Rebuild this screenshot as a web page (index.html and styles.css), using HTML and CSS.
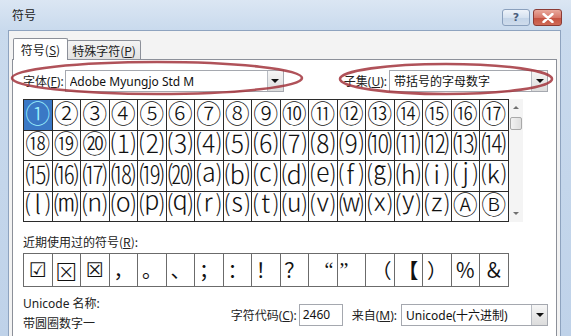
FILE: index.html
```html
<!DOCTYPE html>
<html lang="zh-CN">
<head>
<meta charset="utf-8">
<title>符号</title>
<link rel="stylesheet" href="styles.css">
</head>
<body>
<div class="window">
  <div class="titlebar">
    <span class="title">符号</span>
    <div class="tbtns">
      <div class="tbtn help">?</div>
      <div class="tbtn close"><svg width="12" height="10" viewBox="0 0 12 10"><path d="M1.5 1 L10.5 9 M10.5 1 L1.5 9" stroke="#fff" stroke-width="2.4" stroke-linecap="round"/></svg></div>
    </div>
  </div>
  <div class="client">
    <div class="tabs">
      <div class="tab active">符号(<u>S</u>)</div>
      <div class="tab">特殊字符(<u>P</u>)</div>
    </div>
    <div class="panel">
      <div class="fontrow">
        <div class="group">
          <span class="lbl">字体(<u>F</u>):</span>
          <div class="combo font-combo"><span class="val">Adobe Myungjo Std M</span><span class="drop"><i></i></span></div>
        </div>
        <div class="group right">
          <span class="lbl">子集(<u>U</u>):</span>
          <div class="combo subset-combo"><span class="val">带括号的字母数字</span><span class="drop"><i></i></span></div>
        </div>
      </div>
      <div class="gridwrap">
        <div class="grid symbols">
          <div class="cell sel">①</div><div class="cell">②</div><div class="cell">③</div><div class="cell">④</div><div class="cell">⑤</div><div class="cell">⑥</div><div class="cell">⑦</div><div class="cell">⑧</div><div class="cell">⑨</div><div class="cell">⑩</div><div class="cell">⑪</div><div class="cell">⑫</div><div class="cell">⑬</div><div class="cell">⑭</div><div class="cell">⑮</div><div class="cell">⑯</div><div class="cell">⑰</div>
          <div class="cell">⑱</div><div class="cell">⑲</div><div class="cell">⑳</div><div class="cell">⑴</div><div class="cell">⑵</div><div class="cell">⑶</div><div class="cell">⑷</div><div class="cell">⑸</div><div class="cell">⑹</div><div class="cell">⑺</div><div class="cell">⑻</div><div class="cell">⑼</div><div class="cell">⑽</div><div class="cell">⑾</div><div class="cell">⑿</div><div class="cell">⒀</div><div class="cell">⒁</div>
          <div class="cell">⒂</div><div class="cell">⒃</div><div class="cell">⒄</div><div class="cell">⒅</div><div class="cell">⒆</div><div class="cell">⒇</div><div class="cell">⒜</div><div class="cell">⒝</div><div class="cell">⒞</div><div class="cell">⒟</div><div class="cell">⒠</div><div class="cell">⒡</div><div class="cell">⒢</div><div class="cell">⒣</div><div class="cell">⒤</div><div class="cell">⒥</div><div class="cell">⒦</div>
          <div class="cell">⒧</div><div class="cell">⒨</div><div class="cell">⒩</div><div class="cell">⒪</div><div class="cell">⒫</div><div class="cell">⒬</div><div class="cell">⒭</div><div class="cell">⒮</div><div class="cell">⒯</div><div class="cell">⒰</div><div class="cell">⒱</div><div class="cell">⒲</div><div class="cell">⒳</div><div class="cell">⒴</div><div class="cell">⒵</div><div class="cell">Ⓐ</div><div class="cell">Ⓑ</div>
        </div>
        <div class="scrollbar">
          <div class="sb-btn"><i class="up"></i></div>
          <div class="thumb"></div>
          <div class="sb-space"></div>
          <div class="sb-btn"><i class="down"></i></div>
        </div>
      </div>
      <div class="recent-label">近期使用过的符号(<u>R</u>):</div>
      <div class="grid recent">
        <div class="cell box">☑</div><div class="cell box thin">⊠</div><div class="cell box bold">☒</div><div class="cell pl">，</div><div class="cell pl">。</div><div class="cell pl">、</div><div class="cell pl">；</div><div class="cell pl">：</div><div class="cell">！</div><div class="cell">？</div><div class="cell qr">“</div><div class="cell ql">”</div><div class="cell pr">（</div><div class="cell bk">【</div><div class="cell pl">）</div><div class="cell">％</div><div class="cell">＆</div>
      </div>
      <div class="info">
        <div class="names">
          <div>Unicode 名称:</div>
          <div>带圆圈数字一</div>
        </div>
        <div class="code">
          <span class="lbl">字符代码(<u>C</u>):</span>
          <div class="input">2460</div>
          <span class="lbl from">来自(<u>M</u>):</span>
          <div class="combo from-combo"><span class="val">Unicode(十六进制)</span><span class="drop"><i></i></span></div>
        </div>
      </div>
    </div>
  </div>
  <svg class="marks" width="571" height="336" viewBox="0 0 571 336">
    <ellipse cx="157" cy="78" rx="145" ry="16" fill="none" stroke="#a2343c" stroke-width="2.6" opacity="0.85"/>
    <ellipse cx="446" cy="79" rx="106" ry="15" fill="none" stroke="#a2343c" stroke-width="2.6" opacity="0.85"/>
  </svg>
</div>
</body>
</html>
```
FILE: styles.css
```css
* { box-sizing: border-box; }
html, body { margin: 0; padding: 0; }
body {
  width: 571px;
  height: 336px;
  overflow: hidden;
  font-family: "Noto Sans", "Noto Sans CJK SC", sans-serif;
  font-size: 12px;
  color: #1e1e1e;
}
u { text-decoration: underline; text-underline-offset: 1px; }

.window {
  position: relative;
  width: 571px;
  height: 336px;
  background: linear-gradient(to bottom, #dbe6f3 0px, #c9daed 30px, #bfd2e9 336px);
  overflow: hidden;
}

.titlebar {
  height: 30px;
  display: flex;
  align-items: flex-start;
  justify-content: space-between;
  padding: 0 9px 0 12px;
}
.title {
  margin-top: 6px;
  font-family: "Noto Sans CJK SC", sans-serif;
  font-size: 12px;
  color: #222;
}
.tbtns {
  display: flex;
  gap: 3px;
  margin-top: 9px;
}
.tbtn {
  height: 17px;
  border-radius: 3px;
  display: flex;
  align-items: center;
  justify-content: center;
}
.help {
  width: 28px;
  border: 1px solid #8aa0bd;
  background: linear-gradient(to bottom, #eef3fa 0%, #d6e2f0 50%, #c3d4e8 51%, #cfdcec 100%);
  color: #4a5d7c;
  font-family: "DejaVu Sans", sans-serif;
  font-weight: bold;
  font-size: 11px;
}
.close {
  width: 29px;
  border: 1px solid #8b3b35;
  background: linear-gradient(to bottom, #e9a99c 0%, #d7786a 50%, #c4503f 51%, #cf6b58 100%);
}

.client {
  margin: 0 10px 0 8px;
  height: 306px;
  border: 1px solid #8ea3bf;
  border-bottom: none;
  background: #f3f3f3;
}

.tabs {
  display: flex;
  align-items: flex-end;
  padding: 6px 0 0 4px;
  height: 28px;
  position: relative;
  z-index: 1;
}
.tab {
  display: flex;
  align-items: center;
  justify-content: center;
  font-family: "Noto Sans CJK SC", sans-serif;
  font-size: 12px;
  color: #222;
}
.tab.active {
  width: 55px;
  height: 22px;
  margin-bottom: -1px;
  background: #fff;
  border: 1px solid #8c9099;
  border-bottom: none;
  border-radius: 2px 2px 0 0;
}
.tab:not(.active) {
  width: 74px;
  height: 19px;
  margin-left: -1px;
  border: 1px solid #8c9099;
  border-bottom: none;
  border-radius: 2px 2px 0 0;
  background: linear-gradient(to bottom, #f4f4f4, #e2e2e2);
}

.panel {
  margin-left: 3px;
  width: 545px;
  height: 290px;
  background: #fff;
  border: 1px solid #8c9099;
  padding: 10px 8px 0 10px;
}

.fontrow {
  display: flex;
  align-items: center;
  height: 22px;
}
.group {
  display: flex;
  align-items: center;
  gap: 1px;
}
.group.right { margin-left: auto; gap: 2px; }
.lbl {
  font-family: "Noto Sans", "Noto Sans CJK SC", sans-serif;
  font-size: 12px;
  white-space: nowrap;
  color: #222;
}

.combo {
  height: 22px;
  border: 1px solid #a5a8af;
  background: #fff;
  display: flex;
  align-items: center;
  padding-left: 4px;
}
.combo .val {
  flex: 1;
  white-space: nowrap;
  overflow: hidden;
  font-size: 12px;
  color: #111;
}
.drop {
  width: 16px;
  height: 20px;
  border-left: 1px solid #b8bcc3;
  background: linear-gradient(to bottom, #f6f6f6, #dcdcdc);
  display: flex;
  align-items: center;
  justify-content: center;
}
.drop i {
  width: 0; height: 0;
  border-left: 4px solid transparent;
  border-right: 4px solid transparent;
  border-top: 4px solid #111;
}
.font-combo { width: 219px; }
.subset-combo { width: 159px; }
.from-combo { width: 147px; }

.gridwrap {
  display: flex;
  margin-top: 7px;
}
.grid {
  display: grid;
  grid-template-columns: repeat(17, 28.5px);
  border-left: 1px solid #2b2b2b;
  border-top: 1px solid #2b2b2b;
  width: 485.5px;
}
.symbols { grid-auto-rows: 30.5px; }
.cell {
  border-right: 1px solid #2b2b2b;
  border-bottom: 1px solid #2b2b2b;
  display: flex;
  align-items: center;
  justify-content: center;
  font-family: "DejaVu Serif", "Noto Sans CJK SC", serif;
  font-size: 20px;
  line-height: 1;
  color: #111;
}
.symbols .cell {
  font-family: "Liberation Serif", "Noto Sans CJK SC", serif;
  font-size: 25px;
  font-weight: 300;
  line-height: 25px;
  padding-bottom: 1px;
}
.cell.sel {
  background: #3a78c5;
  color: #9ff4ff;
}

.scrollbar {
  width: 14px;
  height: 123px;
  background: #f4f4f4;
  display: flex;
  flex-direction: column;
  align-items: center;
}
.sb-btn {
  height: 17px;
  width: 14px;
  display: flex;
  align-items: center;
  justify-content: center;
}
.sb-btn i {
  width: 0; height: 0;
  border-left: 3px solid transparent;
  border-right: 3px solid transparent;
}
.sb-btn i.up { border-bottom: 3px solid #707070; }
.sb-btn i.down { border-top: 3px solid #707070; }
.thumb {
  width: 12px;
  height: 13px;
  margin-top: 1px;
  border: 1px solid #a9a9a9;
  border-radius: 2px;
  background: linear-gradient(to right, #f2f2f2, #dedede);
}
.sb-space { flex: 1; }

.recent-label {
  margin-top: 12px;
  height: 16px;
  line-height: 16px;
  font-family: "Noto Sans CJK SC", sans-serif;
  font-size: 12px;
  color: #222;
}
.recent {
  margin-top: 3px;
  grid-auto-rows: 33px;
  border-color: #6b6b6b;
}
.recent .cell {
  border-color: #6b6b6b;
  font-family: "Noto Sans CJK SC", sans-serif;
  font-size: 20px;
}
.recent .cell.box { font-family: "DejaVu Sans", sans-serif; font-size: 20px; }
.recent .cell.thin { font-family: "Noto Sans CJK SC", "DejaVu Sans", sans-serif; font-weight: 300; font-size: 22px; }
.recent .cell.bold { font-weight: bold; }
.recent .cell.pl { justify-content: flex-start; padding-left: 4px; }
.recent .cell.pr { justify-content: flex-end; padding-right: 2px; }
.recent .cell.ql { justify-content: flex-start; padding-left: 2px; font-family: "Liberation Serif", serif; font-size: 20px; align-items: flex-start; padding-top: 6px; }
.recent .cell.qr { justify-content: flex-end; padding-right: 3px; font-family: "Liberation Serif", serif; font-size: 20px; align-items: flex-start; padding-top: 6px; }
.recent .cell.bk { font-weight: bold; }

.info {
  display: flex;
  margin-top: 7px;
}
.names {
  width: 209px;
  font-family: "Noto Sans", "Noto Sans CJK SC", sans-serif;
  font-size: 12px;
  line-height: 20px;
  color: #222;
}
.code {
  display: flex;
  align-items: center;
  margin-top: 10px;
  height: 22px;
}
.input {
  width: 44px;
  height: 22px;
  margin-left: 2px;
  border: 1px solid #a5a8af;
  background: #fff;
  padding-left: 3px;
  line-height: 20px;
  font-size: 12px;
  color: #111;
}
.lbl.from { margin-left: 9px; margin-right: 4px; }

.marks {
  position: absolute;
  left: 0;
  top: 0;
  pointer-events: none;
}
```
